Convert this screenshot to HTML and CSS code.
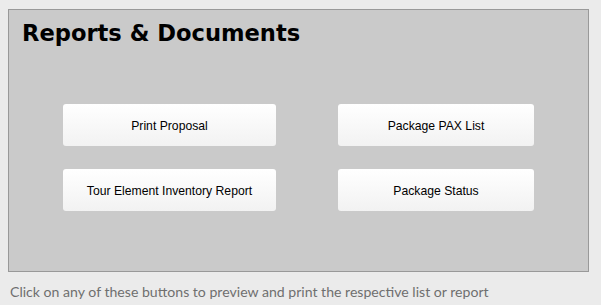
FILE: index.html
```html
<!DOCTYPE html>
<html lang="en">
<head>
    <meta charset="UTF-8">
    <title>Reports &amp; Documents</title>
    <link rel="stylesheet" href="styles.css">
</head>
<body>
    <div class="page">
        <section class="panel">
            <h1>Reports &amp; Documents</h1>
            <div class="report-grid">
                <a href="#" class="report-btn">Print Proposal</a>
                <a href="#" class="report-btn">Package PAX List</a>
                <a href="#" class="report-btn">Tour Element Inventory Report</a>
                <a href="#" class="report-btn">Package Status</a>
            </div>
        </section>
        <p class="hint">Click on any of these buttons to preview and print the respective list or report</p>
    </div>
</body>
</html>
```

FILE: styles.css
```css
/* General */
body, html {
    margin: 0;
    padding: 0;
    background-color: #ebebeb;
}

.page {
    padding: 9px 12px 0 8px;
}

/* Panel */
.panel {
    width: 579px;
    height: 261px;
    background-color: #cacaca;
    border: 1px solid #999999;
}

.panel h1 {
    margin: 0;
    padding: 10px 0 0 13px;
    font-family: "DejaVu Sans", Verdana, sans-serif;
    font-size: 22.6px;
    font-weight: bold;
    line-height: 27px;
    color: #000;
}

/* Buttons */
.report-grid {
    display: grid;
    grid-template-columns: 213px 196px;
    column-gap: 62px;
    row-gap: 23px;
    margin: 57px 0 0 54px;
}

.report-btn {
    display: flex;
    justify-content: center;
    align-items: center;
    height: 42px;
    padding-top: 2px;
    box-sizing: border-box;
    border-radius: 3px;
    background: linear-gradient(#ffffff, #f2f2f2);
    font-family: "Liberation Sans", Arial, sans-serif;
    font-size: 12.2px;
    color: #000;
    text-decoration: none;
}

/* Hint */
.hint {
    margin: 11px 0 0 2px;
    font-family: Lato, Tahoma, sans-serif;
    font-size: 14.1px;
    color: #6f6f6f;
}
```
